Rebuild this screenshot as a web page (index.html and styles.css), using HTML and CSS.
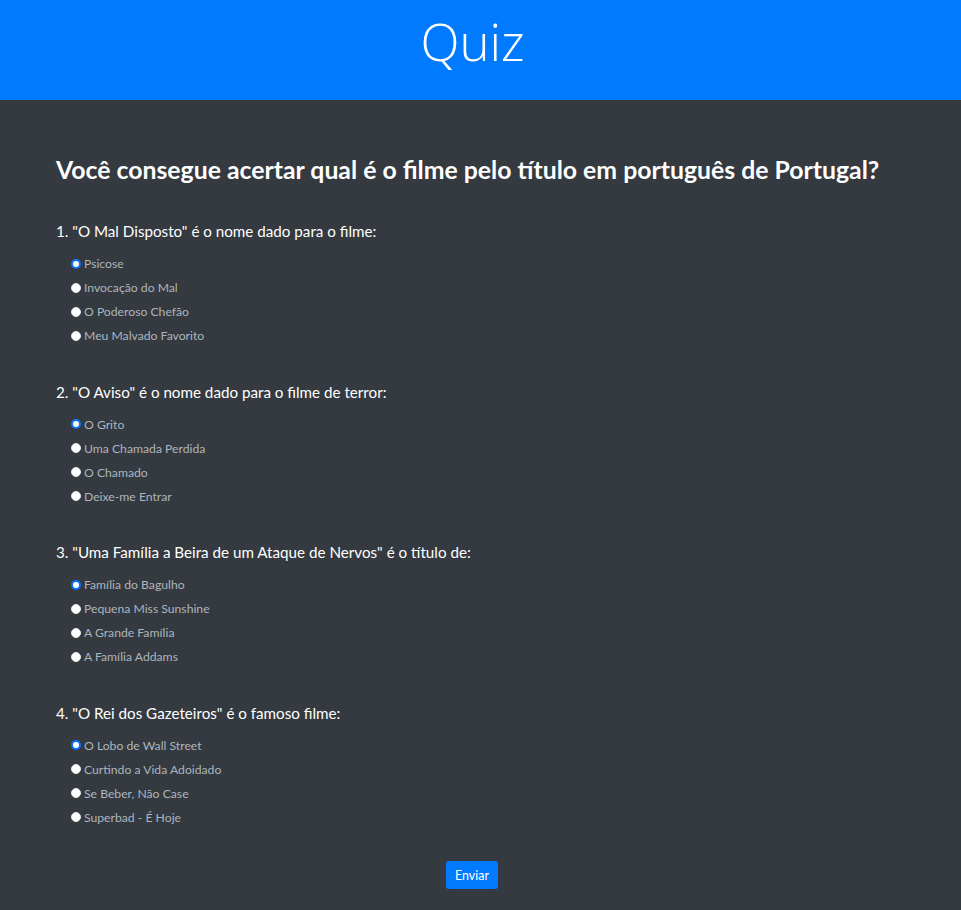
FILE: index.html
```html
<!DOCTYPE html>
<html lang="pt">
<head>
<meta charset="utf-8">
<title>Quiz</title>
<link rel="stylesheet" href="styles.css">
</head>
<body>
<header class="topbar">
  <h1 class="brand">Quiz</h1>
</header>
<main class="content">
  <h2 class="headline">Você consegue acertar qual é o filme pelo título em português de Portugal?</h2>
  <form class="quiz">
    <section class="question">
      <p class="q-text">1. "O Mal Disposto" é o nome dado para o filme:</p>
      <ul class="options">
        <li><label><input type="radio" name="q1" checked><span>Psicose</span></label></li>
        <li><label><input type="radio" name="q1"><span>Invocação do Mal</span></label></li>
        <li><label><input type="radio" name="q1"><span>O Poderoso Chefão</span></label></li>
        <li><label><input type="radio" name="q1"><span>Meu Malvado Favorito</span></label></li>
      </ul>
    </section>
    <section class="question">
      <p class="q-text">2. "O Aviso" é o nome dado para o filme de terror:</p>
      <ul class="options">
        <li><label><input type="radio" name="q2" checked><span>O Grito</span></label></li>
        <li><label><input type="radio" name="q2"><span>Uma Chamada Perdida</span></label></li>
        <li><label><input type="radio" name="q2"><span>O Chamado</span></label></li>
        <li><label><input type="radio" name="q2"><span>Deixe-me Entrar</span></label></li>
      </ul>
    </section>
    <section class="question">
      <p class="q-text">3. "Uma Família a Beira de um Ataque de Nervos" é o título de:</p>
      <ul class="options">
        <li><label><input type="radio" name="q3" checked><span>Família do Bagulho</span></label></li>
        <li><label><input type="radio" name="q3"><span>Pequena Miss Sunshine</span></label></li>
        <li><label><input type="radio" name="q3"><span>A Grande Família</span></label></li>
        <li><label><input type="radio" name="q3"><span>A Família Addams</span></label></li>
      </ul>
    </section>
    <section class="question">
      <p class="q-text">4. "O Rei dos Gazeteiros" é o famoso filme:</p>
      <ul class="options">
        <li><label><input type="radio" name="q4" checked><span>O Lobo de Wall Street</span></label></li>
        <li><label><input type="radio" name="q4"><span>Curtindo a Vida Adoidado</span></label></li>
        <li><label><input type="radio" name="q4"><span>Se Beber, Não Case</span></label></li>
        <li><label><input type="radio" name="q4"><span>Superbad - É Hoje</span></label></li>
      </ul>
    </section>
    <div class="actions">
      <button type="button" class="btn-submit">Enviar</button>
    </div>
  </form>
</main>
</body>
</html>
```

FILE: styles.css
```css
* { box-sizing: border-box; }
html, body {
  margin: 0;
  padding: 0;
}
body {
  background: #343a40;
  color: #fff;
  font-family: Lato, "Open Sans", sans-serif;
  min-height: 910px;
}
.topbar {
  background: #007bff;
  height: 100px;
  display: flex;
  align-items: center;
  justify-content: center;
  padding-right: 16px;
}
.brand {
  margin: 0;
  font-family: "Open Sans", sans-serif;
  font-weight: 300;
  font-size: 51px;
  line-height: 1;
  color: #fff;
  padding-bottom: 18px;
}
.content {
  width: 850px;
  margin-left: 56px;
  padding-top: 54px;
}
.headline {
  margin: 0;
  font-size: 24.8px;
  font-weight: 700;
  line-height: 32px;
}
.quiz {
  margin-top: 33px;
}
.question {
  margin-bottom: 32px;
}
.q-text {
  margin: 0;
  font-size: 15.2px;
  line-height: 24px;
}
.options {
  list-style: none;
  margin: 8.5px 0 0 0;
  padding: 0 0 0 15px;
}
.options li {
  height: 24px;
  display: flex;
  align-items: center;
}
.options label {
  display: flex;
  align-items: center;
  gap: 3px;
  font-size: 12.2px;
  color: #adb5bd;
}
.options input {
  appearance: none;
  -webkit-appearance: none;
  margin: 0;
  width: 10px;
  height: 10px;
  border-radius: 50%;
  background: #fff;
  border: 1px solid #e8e8e8;
}
.options input:checked {
  border: 2px solid #0a74ff;
  background: #fff;
}
.actions {
  display: flex;
  justify-content: center;
  margin-top: 3px;
  padding-right: 18px;
}
.btn-submit {
  background: #007bff;
  color: #fff;
  border: none;
  border-radius: 3px;
  font-family: inherit;
  font-size: 12.5px;
  height: 28px;
  padding: 0 9px;
}
```
